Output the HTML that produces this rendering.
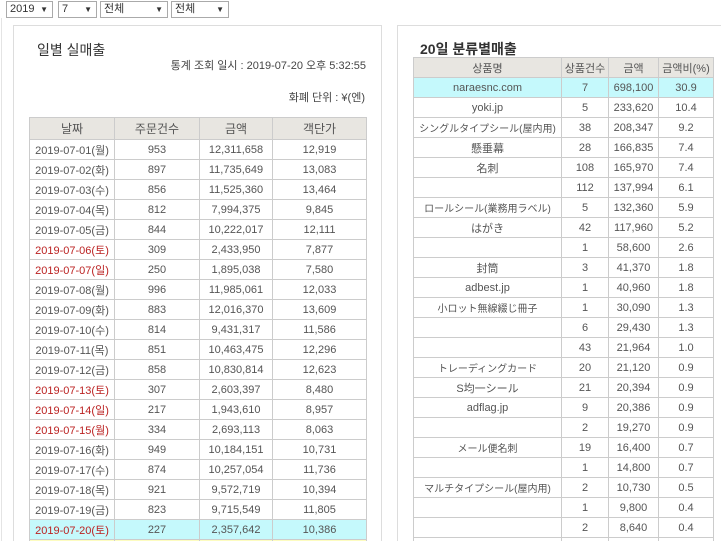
<!DOCTYPE html>
<html><head><meta charset="utf-8">
<style>
*{margin:0;padding:0;box-sizing:border-box}
html,body{width:721px;height:541px;overflow:hidden}
body{background:#fff;font-family:"Liberation Sans","Noto Sans CJK KR",sans-serif;color:#555;font-size:11px;position:relative}
.sel{position:absolute;top:1px;height:17px;border:1px solid #aaa;background:#fff;font-size:11px;line-height:15px;padding-left:3px;color:#333}
.sel:after{content:"▼";position:absolute;right:4px;top:0;font-size:8px;color:#333}
.panel{position:absolute;top:25px;border:1px solid #ddd;height:540px}
.abs{position:absolute;white-space:nowrap}
table{border-collapse:collapse;position:absolute;table-layout:fixed}
td,th{border:1px solid #ccc;text-align:center;height:20px;padding:0;font-weight:normal;font-size:11px;color:#555;white-space:nowrap;overflow:hidden}
th{background:#e8e6e1;color:#555;font-size:12px}
.rt th{font-size:11px}
.r{color:#b22}
.c td{background:#c5f9fc}
.y td{background:#fdfcc0}
</style></head><body>
<div style="position:absolute;left:1px;top:18px;width:1px;height:530px;background:#e4e4e4"></div>
<div class="sel" style="left:6px;width:47px">2019</div>
<div class="sel" style="left:58px;width:39px">7</div>
<div class="sel" style="left:100px;width:68px">전체</div>
<div class="sel" style="left:171px;width:58px">전체</div>

<div class="panel" style="left:13px;width:369px"></div>
<div class="panel" style="left:397px;width:330px"></div>

<div class="abs" style="left:37px;top:40px;font-size:14px;color:#333">일별 실매출</div>
<div class="abs" style="right:355px;top:57px;font-size:11px;color:#444">통계 조회 일시 : 2019-07-20 오후 5:32:55</div>
<div class="abs" style="right:356px;top:89px;font-size:11px;color:#444">화폐 단위 : ¥(엔)</div>

<table style="left:29px;top:117px;width:337px">
<colgroup><col style="width:85px"><col style="width:85px"><col style="width:73px"><col style="width:94px"></colgroup>
<tr><th style="height:22px">날짜</th><th>주문건수</th><th>금액</th><th>객단가</th></tr>
<tr><td>2019-07-01(월)</td><td>953</td><td>12,311,658</td><td>12,919</td></tr>
<tr><td>2019-07-02(화)</td><td>897</td><td>11,735,649</td><td>13,083</td></tr>
<tr><td>2019-07-03(수)</td><td>856</td><td>11,525,360</td><td>13,464</td></tr>
<tr><td>2019-07-04(목)</td><td>812</td><td>7,994,375</td><td>9,845</td></tr>
<tr><td>2019-07-05(금)</td><td>844</td><td>10,222,017</td><td>12,111</td></tr>
<tr><td class="r">2019-07-06(토)</td><td>309</td><td>2,433,950</td><td>7,877</td></tr>
<tr><td class="r">2019-07-07(일)</td><td>250</td><td>1,895,038</td><td>7,580</td></tr>
<tr><td>2019-07-08(월)</td><td>996</td><td>11,985,061</td><td>12,033</td></tr>
<tr><td>2019-07-09(화)</td><td>883</td><td>12,016,370</td><td>13,609</td></tr>
<tr><td>2019-07-10(수)</td><td>814</td><td>9,431,317</td><td>11,586</td></tr>
<tr><td>2019-07-11(목)</td><td>851</td><td>10,463,475</td><td>12,296</td></tr>
<tr><td>2019-07-12(금)</td><td>858</td><td>10,830,814</td><td>12,623</td></tr>
<tr><td class="r">2019-07-13(토)</td><td>307</td><td>2,603,397</td><td>8,480</td></tr>
<tr><td class="r">2019-07-14(일)</td><td>217</td><td>1,943,610</td><td>8,957</td></tr>
<tr><td class="r">2019-07-15(월)</td><td>334</td><td>2,693,113</td><td>8,063</td></tr>
<tr><td>2019-07-16(화)</td><td>949</td><td>10,184,151</td><td>10,731</td></tr>
<tr><td>2019-07-17(수)</td><td>874</td><td>10,257,054</td><td>11,736</td></tr>
<tr><td>2019-07-18(목)</td><td>921</td><td>9,572,719</td><td>10,394</td></tr>
<tr><td>2019-07-19(금)</td><td>823</td><td>9,715,549</td><td>11,805</td></tr>
<tr class="c"><td class="r">2019-07-20(토)</td><td>227</td><td>2,357,642</td><td>10,386</td></tr>
<tr class="y"><td></td><td></td><td></td><td></td></tr>
</table>

<div class="abs" style="left:420px;top:39px;font-size:14px;color:#333;font-weight:bold">20일 분류별매출</div>

<table class="rt" style="left:413px;top:57px;width:300px">
<colgroup><col style="width:148px"><col style="width:47px"><col style="width:50px"><col style="width:55px"></colgroup>
<tr><th>상품명</th><th>상품건수</th><th>금액</th><th>금액비(%)</th></tr>
<tr class="c"><td>naraesnc.com</td><td>7</td><td>698,100</td><td>30.9</td></tr>
<tr><td>yoki.jp</td><td>5</td><td>233,620</td><td>10.4</td></tr>
<tr><td style="font-size:10px">シングルタイプシール(屋内用)</td><td>38</td><td>208,347</td><td>9.2</td></tr>
<tr><td>懸垂幕</td><td>28</td><td>166,835</td><td>7.4</td></tr>
<tr><td>名刺</td><td>108</td><td>165,970</td><td>7.4</td></tr>
<tr><td></td><td>112</td><td>137,994</td><td>6.1</td></tr>
<tr><td style="font-size:10px">ロールシール(業務用ラベル)</td><td>5</td><td>132,360</td><td>5.9</td></tr>
<tr><td>はがき</td><td>42</td><td>117,960</td><td>5.2</td></tr>
<tr><td></td><td>1</td><td>58,600</td><td>2.6</td></tr>
<tr><td>封筒</td><td>3</td><td>41,370</td><td>1.8</td></tr>
<tr><td>adbest.jp</td><td>1</td><td>40,960</td><td>1.8</td></tr>
<tr><td style="font-size:10px">小ロット無線綴じ冊子</td><td>1</td><td>30,090</td><td>1.3</td></tr>
<tr><td></td><td>6</td><td>29,430</td><td>1.3</td></tr>
<tr><td></td><td>43</td><td>21,964</td><td>1.0</td></tr>
<tr><td style="font-size:10px">トレーディングカード</td><td>20</td><td>21,120</td><td>0.9</td></tr>
<tr><td>S均一シール</td><td>21</td><td>20,394</td><td>0.9</td></tr>
<tr><td>adflag.jp</td><td>9</td><td>20,386</td><td>0.9</td></tr>
<tr><td></td><td>2</td><td>19,270</td><td>0.9</td></tr>
<tr><td style="font-size:10px">メール便名刺</td><td>19</td><td>16,400</td><td>0.7</td></tr>
<tr><td></td><td>1</td><td>14,800</td><td>0.7</td></tr>
<tr><td style="font-size:10px">マルチタイプシール(屋内用)</td><td>2</td><td>10,730</td><td>0.5</td></tr>
<tr><td></td><td>1</td><td>9,800</td><td>0.4</td></tr>
<tr><td></td><td>2</td><td>8,640</td><td>0.4</td></tr>
<tr><td></td><td></td><td></td><td></td></tr>
</table>
</body></html>
